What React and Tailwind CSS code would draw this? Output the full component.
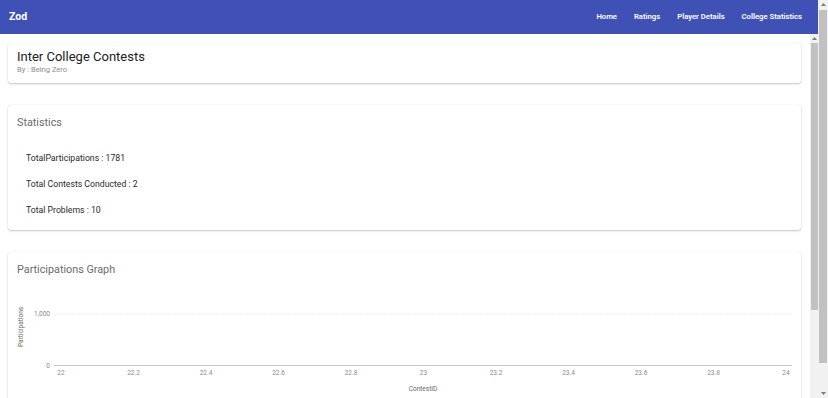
import React from "react";

const xTicks = ["22", "22.2", "22.4", "22.6", "22.8", "23", "23.2", "23.4", "23.6", "23.8", "24"];

function Card({ className = "", children }) {
  return (
    <div
      className={
        "bg-white rounded-[3px] shadow-[0_1px_2px_0_rgba(0,0,0,0.22),0_0_1px_0_rgba(0,0,0,0.14)] " +
        className
      }
    >
      {children}
    </div>
  );
}

function Arrow({ down = false }) {
  return (
    <svg width="5" height="3" viewBox="0 0 5 3" className="block">
      {down ? <polygon points="0,0 5,0 2.5,3" fill="#7a7a7a" /> : <polygon points="2.5,0 5,3 0,3" fill="#7a7a7a" />}
    </svg>
  );
}

export default function App() {
  return (
    <div className="h-[398px] w-full overflow-hidden flex bg-white font-['Roboto','Liberation_Sans',sans-serif]">
      {/* page column */}
      <div className="flex-1 min-w-0 flex flex-col">
        <header className="h-[34px] shrink-0 bg-[#3f51b5] flex items-center justify-between pl-[9px] pr-[16px] text-white">
          <div className="text-[10.5px] font-bold leading-none">Zod</div>
          <nav className="flex items-center gap-[17px] text-[7.7px] font-semibold leading-none">
            <span>Home</span>
            <span>Ratings</span>
            <span>Player Details</span>
            <span>College Statistics</span>
          </nav>
        </header>

        <div className="flex-1 min-h-0 flex">
          <main className="flex-1 min-w-0 overflow-hidden pl-[8px] pr-[9px] pt-[9px] flex flex-col gap-[22px]">
            <Card className="shrink-0 px-[9px] pt-[6px] pb-[8px]">
              <div className="text-[13px] leading-[16px] text-[#212121]">Inter College Contests</div>
              <div className="text-[7.6px] leading-[10px] text-[#8c8c8c]">By : Being Zero</div>
            </Card>

            <Card className="shrink-0 px-[9px] pt-[11px] pb-[14px]">
              <div className="text-[10.8px] leading-[14px] text-[#6b6b6b]">Statistics</div>
              <div className="mt-[22px] pl-[9px] flex flex-col gap-[14px] text-[8.7px] leading-[12px] text-[#2a2a2a]">
                <div>TotalParticipations : 1781</div>
                <div>Total Contests Conducted : 2</div>
                <div>Total Problems : 10</div>
              </div>
            </Card>

            <Card className="shrink-0 h-[339px] px-[9px] pt-[11px]">
              <div className="text-[10.8px] leading-[14px] text-[#6b6b6b]">Participations Graph</div>
              <svg width="775" height="130" className="block" fontFamily="Roboto, 'Liberation Sans', sans-serif">
                <line x1="37" y1="37" x2="775" y2="37" stroke="#ededed" strokeWidth="1" strokeDasharray="2 1" />
                <line x1="37" y1="88.5" x2="775" y2="88.5" stroke="#c4c4c4" strokeWidth="1" />
                <text x="33" y="37" fontSize="6.5" fill="#8a8a8a" textAnchor="end" dominantBaseline="central">1,000</text>
                <text x="33" y="89" fontSize="6.5" fill="#8a8a8a" textAnchor="end" dominantBaseline="central">0</text>
                <text
                  x="4"
                  y="50"
                  fontSize="6.5"
                  fill="#666"
                  textAnchor="middle"
                  dominantBaseline="central"
                  transform="rotate(-90 4 50)"
                >
                  Participations
                </text>
                {xTicks.map((t, i) => (
                  <text
                    key={t}
                    x={44 + i * 72.5}
                    y="95.5"
                    fontSize="6.5"
                    fill="#8a8a8a"
                    textAnchor="middle"
                    dominantBaseline="central"
                  >
                    {t}
                  </text>
                ))}
                <text x="406" y="112" fontSize="6.5" fill="#666" textAnchor="middle" dominantBaseline="central">
                  ContestID
                </text>
              </svg>
            </Card>
          </main>

          {/* inner scrollbar */}
          <div className="w-[8px] shrink-0 bg-[#f1f1f1] flex flex-col">
            <div className="h-[9px] shrink-0 flex items-center justify-center">
              <Arrow />
            </div>
            <div className="h-[267px] shrink-0 ml-[1px] bg-[#c1c1c1]" />
          </div>
        </div>
      </div>

      {/* outer scrollbar */}
      <div className="w-[10px] shrink-0 bg-[#f1f1f1] flex flex-col">
        <div className="h-[9px] shrink-0 flex items-center justify-center">
          <Arrow />
        </div>
        <div className="flex-1 pt-[1px] pb-[26px] px-[1px] flex flex-col">
          <div className="flex-1 bg-[#c1c1c1]" />
        </div>
        <div className="h-[9px] shrink-0 flex items-center justify-center">
          <Arrow down />
        </div>
      </div>
    </div>
  );
}
